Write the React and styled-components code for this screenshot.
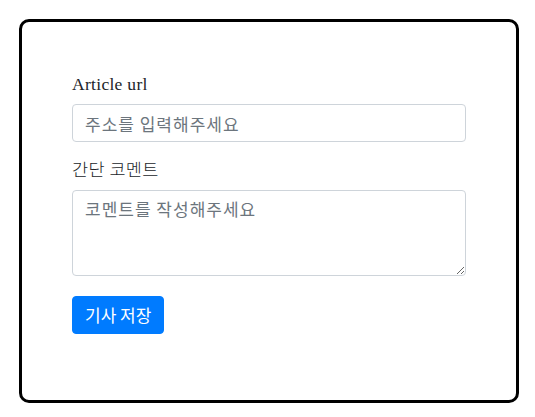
import React from "react";
import styled, { createGlobalStyle } from "styled-components";

const GlobalStyle = createGlobalStyle`
  body {
    margin: 0;
    background: #fff;
    font-family: "Noto Sans CJK KR", "Noto Sans", sans-serif;
  }
`;

export default function App() {
  return (
    <Page>
      <GlobalStyle />
      <Card>
        <Group>
          <Label htmlFor="url">Article url</Label>
          <Input id="url" type="text" placeholder="주소를 입력해주세요" />
        </Group>
        <Group>
          <Label htmlFor="comment">간단 코멘트</Label>
          <TextArea id="comment" rows={3} placeholder="코멘트를 작성해주세요" />
        </Group>
        <SaveButton type="button">기사 저장</SaveButton>
      </Card>
    </Page>
  );
}

const Page = styled.div`
  padding: 19px;
`;

const Card = styled.form`
  box-sizing: border-box;
  width: 500px;
  height: 384px;
  border: 3px solid #000;
  border-radius: 10px;
  padding: 50px 50px;
`;

const Group = styled.div`
  margin-bottom: 16px;
`;

const Label = styled.label`
  display: block;
  margin-bottom: 8px;
  font-family: "Liberation Serif", "Noto Sans CJK KR", serif;
  font-size: 17.5px;
  font-weight: 300;
  letter-spacing: 0.3px;
  line-height: 24px;
  color: #212529;
`;

const fieldStyles = `
  display: block;
  box-sizing: border-box;
  width: 394px;
  padding: 6px 12px;
  border: 1px solid #ced4da;
  border-radius: 4px;
  font-family: "Noto Sans CJK KR", "Noto Sans", sans-serif;
  font-size: 17px;
  font-weight: 400;
  letter-spacing: 1px;
  line-height: 24px;
  color: #495057;
  background: #fff;
  &::placeholder {
    color: #6c757d;
  }
`;

const Input = styled.input`
  ${fieldStyles}
  height: 38px;
`;

const TextArea = styled.textarea`
  ${fieldStyles}
  height: 86px;
  resize: vertical;
`;

const SaveButton = styled.button`
  display: inline-block;
  margin-top: 4px;
  height: 38px;
  padding: 6px 12px;
  border: 1px solid #007bff;
  border-radius: 4px;
  background: #007bff;
  color: #fff;
  font-family: "Noto Sans CJK KR", "Noto Sans", sans-serif;
  font-size: 17px;
  line-height: 24px;
`;
